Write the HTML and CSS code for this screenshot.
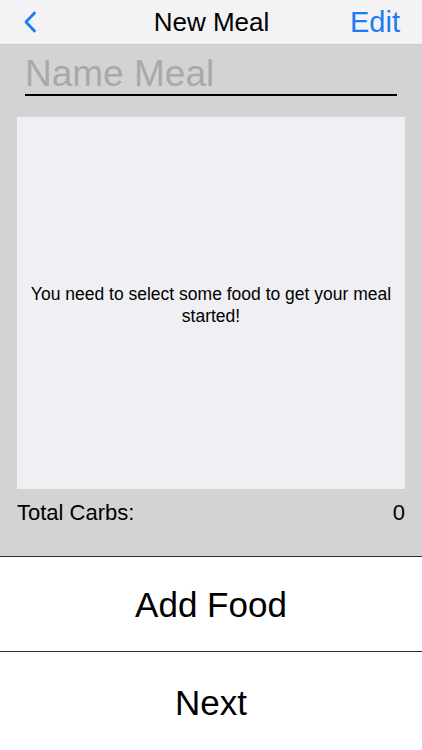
FILE: index.html
```html
<!DOCTYPE html>
<html lang="en">
<head>
    <meta charset="UTF-8">
    <title>New Meal</title>
    <link rel="stylesheet" href="styles.css">
</head>
<body>
<div class="nav">
    <span class="back">
        <svg width="14" height="22" viewBox="0 0 14 22">
            <path d="M11.5 2 L3 11 L11.5 20" fill="none" stroke="#1a7cf2" stroke-width="2.8" stroke-linecap="round" stroke-linejoin="round"/>
        </svg>
    </span>
    <span class="title">New Meal</span>
    <span class="edit">Edit</span>
</div>
<div class="content">
    <div class="name">Name Meal</div>
    <div class="list">
        <p>You need to select some food to get your meal started!</p>
    </div>
    <div class="total">
        <span>Total Carbs:</span>
        <span>0</span>
    </div>
</div>
<div class="btn add">Add Food</div>
<div class="btn next">Next</div>
</body>
</html>
```
FILE: styles.css
```css
* {
    margin: 0;
    padding: 0;
    box-sizing: border-box;
}

body {
    width: 422px;
    height: 750px;
    overflow: hidden;
    background-color: #ffffff;
    font-family: "Liberation Sans", Arial, sans-serif;
    color: #000000;
}

.nav {
    height: 45px;
    background-color: #f3f3f5;
    border-bottom: 1px solid #c9c9cd;
    display: flex;
    align-items: center;
    justify-content: space-between;
    padding: 0 22px 0 23px;
}

.back {
    width: 60px;
    display: flex;
    align-items: center;
}

.title {
    font-size: 26px;
}

.edit {
    width: 60px;
    text-align: right;
    font-size: 29px;
    color: #1a7cf2;
}

.content {
    height: 512px;
    background-color: #d3d3d3;
    border-bottom: 1px solid #2f2f2f;
    padding: 0 17px;
}

.name {
    margin: 0 8px;
    height: 51px;
    padding-top: 3px;
    line-height: 52px;
    font-size: 37px;
    color: #a8a8ad;
    border-bottom: 2px solid #000000;
}

.list {
    margin-top: 21px;
    height: 372px;
    background-color: #efeff4;
    display: flex;
    align-items: center;
    justify-content: center;
    padding: 4px 10px 0;
}

.list p {
    font-size: 17.5px;
    line-height: 22px;
    text-align: center;
}

.total {
    height: 46px;
    padding-top: 2px;
    display: flex;
    align-items: center;
    justify-content: space-between;
    font-size: 22px;
}

.btn {
    height: 95px;
    padding-top: 2px;
    display: flex;
    align-items: center;
    justify-content: center;
    font-size: 35px;
}

.add {
    border-bottom: 1px solid #2f2f2f;
}

.next {
    height: 98px;
    padding-top: 3px;
}
```
